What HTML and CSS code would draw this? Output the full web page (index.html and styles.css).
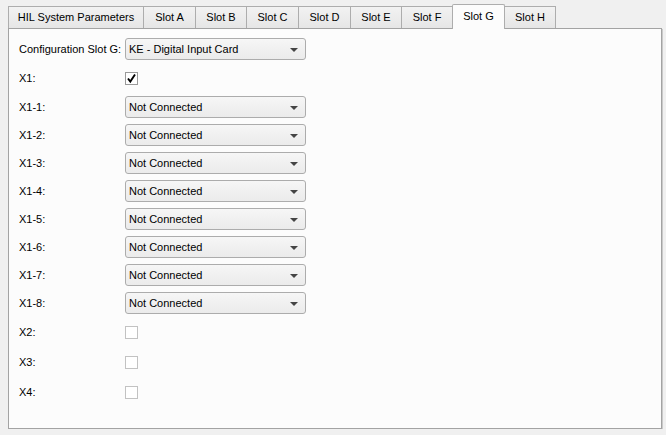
FILE: index.html
```html
<!DOCTYPE html>
<html lang="en">
<head>
    <meta charset="UTF-8">
    <title>HIL System Parameters</title>
    <link rel="stylesheet" href="styles.css">
</head>
<body>
    <div class="tabs">
        <div class="tab-bar">
            <div class="tab">HIL System Parameters</div>
            <div class="tab">Slot A</div>
            <div class="tab">Slot B</div>
            <div class="tab">Slot C</div>
            <div class="tab">Slot D</div>
            <div class="tab">Slot E</div>
            <div class="tab">Slot F</div>
            <div class="tab active">Slot G</div>
            <div class="tab">Slot H</div>
        </div>
        <div class="panel">
            <div class="form">
                <label>Configuration Slot G:</label>
                <div class="combo">KE - Digital Input Card<span class="arrow"></span></div>

                <label class="tall">X1:</label>
                <div class="tall">
                    <span class="check checked">
                        <svg width="11" height="11" viewBox="0 0 11 11"><path d="M2 5.5 L4.3 8.5 L9 1.5" fill="none" stroke="#000" stroke-width="1.9"/></svg>
                    </span>
                </div>

                <label>X1-1:</label>
                <div class="combo">Not Connected<span class="arrow"></span></div>
                <label>X1-2:</label>
                <div class="combo">Not Connected<span class="arrow"></span></div>
                <label>X1-3:</label>
                <div class="combo">Not Connected<span class="arrow"></span></div>
                <label>X1-4:</label>
                <div class="combo">Not Connected<span class="arrow"></span></div>
                <label>X1-5:</label>
                <div class="combo">Not Connected<span class="arrow"></span></div>
                <label>X1-6:</label>
                <div class="combo">Not Connected<span class="arrow"></span></div>
                <label>X1-7:</label>
                <div class="combo">Not Connected<span class="arrow"></span></div>
                <label>X1-8:</label>
                <div class="combo">Not Connected<span class="arrow"></span></div>

                <label class="tall">X2:</label>
                <div class="tall"><span class="check"></span></div>
                <label class="tall">X3:</label>
                <div class="tall"><span class="check"></span></div>
                <label class="tall">X4:</label>
                <div class="tall"><span class="check"></span></div>
            </div>
        </div>
    </div>
</body>
</html>
```

FILE: styles.css
```css
body {
    margin: 0;
    background-color: #f0f0f0;
    font-family: "Liberation Sans", Arial, sans-serif;
    font-size: 11px;
    color: #000;
}

.tabs {
    padding: 4px 0 0 8px;
    width: 654px;
}

.tab-bar {
    display: flex;
    align-items: flex-end;
    height: 25px;
    position: relative;
    z-index: 1;
}

.tab {
    box-sizing: border-box;
    height: 22px;
    margin-bottom: 1px;
    line-height: 21px;
    border: 1px solid #adadad;
    border-bottom: none;
    border-left: none;
    background: linear-gradient(#f2f2f2, #e6e6e6);
    text-align: center;
    white-space: nowrap;
}

.tab:first-child {
    border-left: 1px solid #adadad;
}

.tab:nth-child(1) { width: 136px; }
.tab:nth-child(2) { width: 52px; }
.tab:nth-child(3) { width: 51px; }
.tab:nth-child(4) { width: 52px; }
.tab:nth-child(5) { width: 52px; }
.tab:nth-child(6) { width: 51px; }
.tab:nth-child(7) { width: 51px; }
.tab:nth-child(8) { width: 53px; }
.tab:nth-child(9) { width: 51px; }

.tab.active {
    height: 25px;
    margin-bottom: 0;
    line-height: 23px;
    background: #fcfcfc;
    border-left: 1px solid #adadad;
    margin-left: -1px;
    border-radius: 2px 2px 0 0;
}

.panel {
    margin-top: -1px;
    background-color: #fcfcfc;
    border: 1px solid #a3a3a3;
    box-shadow: 1px 1px 0 #c9c9c9;
    padding: 9px 10px;
    box-sizing: border-box;
    height: 401px;
}

.form {
    display: grid;
    grid-template-columns: 106px 181px;
    row-gap: 6px;
    align-items: center;
}

.form label {
    height: 22px;
    line-height: 22px;
}

.form .tall {
    height: 24px;
    display: flex;
    align-items: center;
}

.combo {
    position: relative;
    height: 22px;
    line-height: 21px;
    box-sizing: border-box;
    border: 1px solid #acacac;
    border-radius: 3px;
    background: linear-gradient(#f6f6f6, #ebebeb);
    padding-left: 3px;
}

.arrow {
    position: absolute;
    right: 7px;
    top: 9px;
    width: 0;
    height: 0;
    border-left: 4px solid transparent;
    border-right: 4px solid transparent;
    border-top: 4px solid #444;
}

.check {
    display: inline-block;
    width: 11px;
    height: 11px;
    border: 1px solid #c2c2c2;
    background: #fff;
}

.check svg {
    display: block;
}

.check.checked {
    border-color: #9a9a9a;
}
```
